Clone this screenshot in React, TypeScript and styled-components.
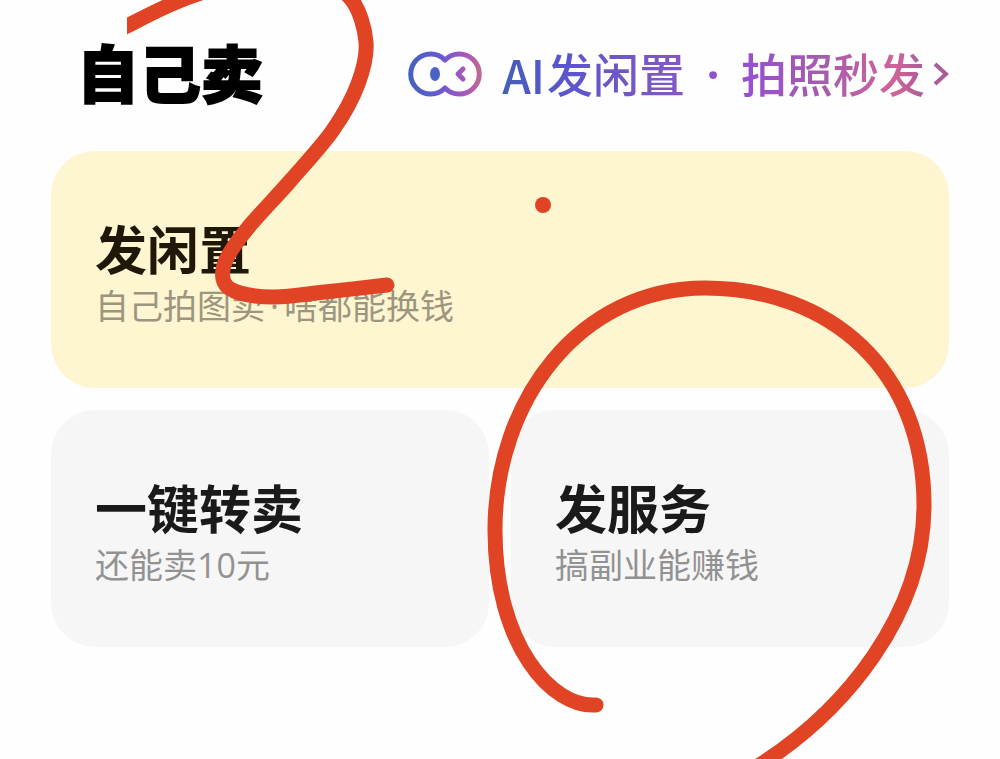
import React from "react";
import styled, { createGlobalStyle } from "styled-components";

const GlobalStyle = createGlobalStyle`
  * { box-sizing: border-box; }
  body {
    margin: 0;
    background: #fefefe;
    font-family: "Open Sans", "Noto Sans CJK SC", sans-serif;
  }
`;

const Page = styled.main`
  position: relative;
  min-height: 100vh;
  overflow: hidden;
  padding: 0 51px;
`;

const Header = styled.header`
  display: flex;
  align-items: center;
  justify-content: space-between;
  height: 147px;
  margin-bottom: 4px;
  padding-left: 26px;
`;

const Heading = styled.h1`
  margin: 0;
  font-size: 62px;
  line-height: 64px;
  font-weight: 900;
  color: #000;
  -webkit-text-stroke: 2px #000;
`;

const AiLink = styled.a`
  display: flex;
  align-items: center;
  gap: 20px;
  text-decoration: none;
`;

const AiLabel = styled.span`
  display: flex;
  align-items: center;
  gap: 8px;
`;

const AiText = styled.span`
  display: flex;
  align-items: center;
  font-size: 46px;
  line-height: 64px;
  font-weight: 500;
  white-space: nowrap;
  color: transparent;
  background: linear-gradient(90deg, #4560b8 0%, #5b55cf 16%, #7c58c4 36%, #9a50cf 60%, #a65cae 76%, #d0639a 93%, #a85c98 100%);
  background-clip: text;
  -webkit-background-clip: text;
`;

const AiTag = styled.span`
  padding-right: 2px;
  font-family: "Noto Sans CJK SC", sans-serif;
`;

const Dot = styled.span`
  width: 56px;
  text-align: center;
  font-weight: 700;
`;

const Grid = styled.section`
  display: grid;
  grid-template-columns: 1fr 1fr;
  gap: 22px;
`;

const Card = styled.button<{ $featured?: boolean }>`
  grid-column: ${(p) => (p.$featured ? "1 / -1" : "auto")};
  display: flex;
  flex-direction: column;
  align-items: flex-start;
  min-height: 237px;
  padding: 69px 44px 56px;
  border: 0;
  border-radius: 44px;
  text-align: left;
  font-family: inherit;
  background: ${(p) => (p.$featured ? "#fef5d1" : "#f6f6f6")};
  color: ${(p) => (p.$featured ? "#1f1808" : "#1a1a1a")};
`;

const CardTitle = styled.span`
  font-size: 52px;
  line-height: 60px;
  font-weight: 700;
`;

const CardNote = styled.span<{ $featured?: boolean }>`
  font-size: 34px;
  line-height: 52px;
  font-weight: 400;
  color: ${(p) => (p.$featured ? "#9c9680" : "#929292")};
`;

const NoteDot = styled.span`
  padding: 0 5px;
`;

const Ink = styled.svg`
  position: absolute;
  top: 0;
  left: 0;
  width: 100%;
  pointer-events: none;
`;

type Point = [number, number];

/* Smooth curve running through every point of a pen stroke. */
function curve(points: Point[]): string {
  let d = `M${points[0][0]} ${points[0][1]}`;
  for (let i = 0; i < points.length - 1; i++) {
    const a = points[Math.max(i - 1, 0)];
    const b = points[i];
    const c = points[i + 1];
    const e = points[Math.min(i + 2, points.length - 1)];
    d += ` C${b[0] + (c[0] - a[0]) / 6} ${b[1] + (c[1] - a[1]) / 6} ${c[0] - (e[0] - b[0]) / 6} ${c[1] - (e[1] - b[1]) / 6} ${c[0]} ${c[1]}`;
  }
  return d;
}

const numberTwo: Point[] = [
  [110, 36], [127, 26], [184, -1], [250, -20], [315, -20], [351, -1],
  [366, 42], [358, 84], [333, 130], [291, 180], [247, 229], [226, 260],
  [224, 282], [240, 293], [275, 297], [325, 292], [387, 285],
];

const circle =
  "M596 705 C552 708 495 645 495 530 C495 400 580 288 705 288 C830 288 924 370 924 505 C924 610 850 712 745 774";

const cards = [
  { title: "发闲置", note: ["自己拍图卖", "啥都能换钱"], featured: true },
  { title: "一键转卖", note: ["还能卖10元"], featured: false },
  { title: "发服务", note: ["搞副业能赚钱"], featured: false },
];

function AiFace() {
  return (
    <svg width="74" height="48" viewBox="0 0 74 48" fill="none" aria-hidden="true">
      <defs>
        <linearGradient id="face" x1="0" y1="0" x2="74" y2="0" gradientUnits="userSpaceOnUse">
          <stop offset="0" stopColor="#4263bd" />
          <stop offset="0.45" stopColor="#6a58d0" />
          <stop offset="0.75" stopColor="#a657bd" />
          <stop offset="1" stopColor="#c0698f" />
        </linearGradient>
      </defs>
      <g stroke="url(#face)" strokeLinejoin="round" strokeLinecap="round">
        <path strokeWidth="5" d="M37 10 A20 20 0 1 0 37 38 A20 20 0 1 0 37 10 Z" />
        <path strokeWidth="5" d="M55 19 L50 24 L55 29" />
      </g>
      <ellipse cx="27" cy="24" rx="5" ry="7" fill="#4a62c4" />
    </svg>
  );
}

function Chevron() {
  return (
    <svg width="16" height="24" viewBox="0 0 16 24" fill="none" aria-hidden="true">
      <path d="M2 2 L13 12 L2 22" stroke="#a85c98" strokeWidth="4" />
    </svg>
  );
}

export default function App() {
  return (
    <>
      <GlobalStyle />
      <Page>
        <Header>
          <Heading>自己卖</Heading>
          <AiLink href="#ai">
            <AiFace />
            <AiLabel>
              <AiText>
                <AiTag>AI</AiTag>发闲置<Dot>·</Dot>拍照秒发
              </AiText>
              <Chevron />
            </AiLabel>
          </AiLink>
        </Header>
        <Grid>
          {cards.map((card) => (
            <Card key={card.title} type="button" $featured={card.featured}>
              <CardTitle>{card.title}</CardTitle>
              <CardNote $featured={card.featured}>
                {card.note.map((part, i) => (
                  <React.Fragment key={part}>
                    {i > 0 && <NoteDot>·</NoteDot>}
                    {part}
                  </React.Fragment>
                ))}
              </CardNote>
            </Card>
          ))}
        </Grid>
        <Ink viewBox="0 0 1000 759" aria-hidden="true">
          <defs>
            <clipPath id="edge">
              <rect x="127" y="0" width="873" height="759" />
            </clipPath>
          </defs>
          <g fill="none" stroke="#e04425" strokeWidth="15" strokeLinecap="round" strokeLinejoin="round">
            <path d={curve(numberTwo)} clipPath="url(#edge)" />
            <path d={circle} />
          </g>
          <circle cx="543" cy="205" r="8" fill="#e04425" />
        </Ink>
      </Page>
    </>
  );
}
